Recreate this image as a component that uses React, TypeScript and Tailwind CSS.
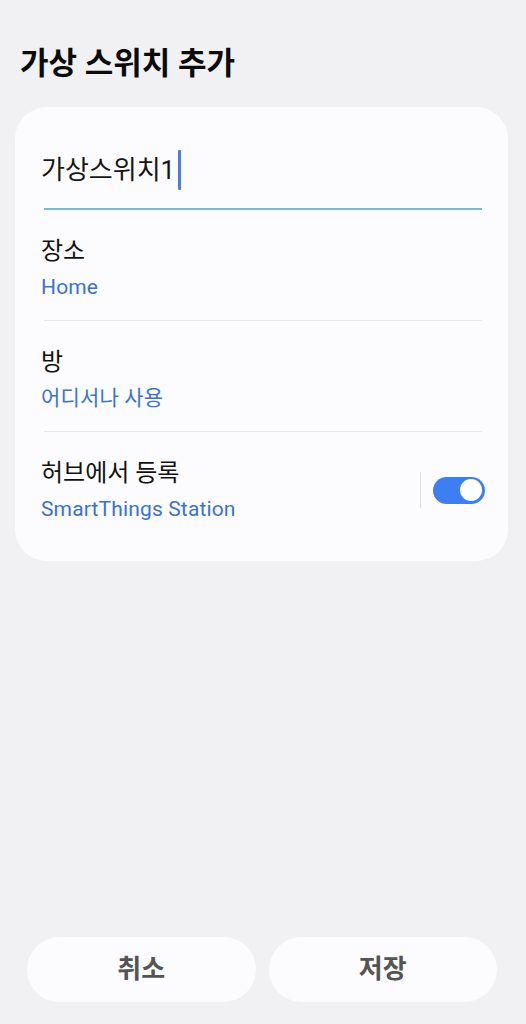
import React from "react";

const FONT = { fontFamily: 'Roboto, "Noto Sans CJK KR", sans-serif' };

function Row({ title, value, last, children }: { title: string; value: string; last?: boolean; children?: React.ReactNode }) {
  return (
    <div className={`flex items-center pt-[26px] pb-[20px] ml-[3px] ${last ? "" : "border-b border-[#e6e6e8]"}`}>
      <div className="flex-1 -ml-[3px]">
        <div className="text-[24px] leading-[30px] text-[#111111]">{title}</div>
        <div className="mt-[8px] text-[21px] leading-[26px] tracking-[0.15px] text-[#3b72d2]">{value}</div>
      </div>
      {children}
    </div>
  );
}

export default function App() {
  return (
    <div className="min-h-[1024px] bg-[#f1f1f3] flex flex-col" style={FONT}>
      <div className="pl-[20px] pt-[47px] text-[31px] leading-[34px] font-bold text-[#0b0b0b]">가상 스위치 추가</div>
      <div className="mt-[26px] ml-[15px] mr-[18px] bg-[#fcfcfe] rounded-[32px] pl-[26px] pr-[26px] pb-[19px]">
        <div className="pt-[43px] pb-[18px] border-b-2 border-[#7bbad2] ml-[3px]">
          <div className="flex items-center h-[40px] -ml-[3px]">
            <span className="text-[26px] leading-[40px] text-[#161616]">가상스위치1</span>
            <span className="ml-[3px] w-[3px] h-[40px] bg-[#4a7de6] rounded-[1px]" />
          </div>
        </div>
        <Row title="장소" value="Home" />
        <Row title="방" value="어디서나 사용" />
        <Row title="허브에서 등록" value="SmartThings Station" last>
          <div className="w-px h-[36px] bg-[#e4e4e6] mr-[12px]" />
          <div className="-mr-[3px] w-[52px] h-[27px] rounded-full bg-[#3d7ef2] flex items-center justify-end pr-[3px]">
            <div className="w-[22px] h-[22px] rounded-full bg-white" />
          </div>
        </Row>
      </div>
      <div className="mt-auto flex gap-[13px] ml-[27px] mr-[29px] mb-[22px]">
        <button className="flex-1 h-[65px] rounded-full bg-[#fcfcfe] text-[26px] font-bold text-[#545456]">취소</button>
        <button className="flex-1 h-[65px] rounded-full bg-[#fcfcfe] text-[26px] font-bold text-[#545456]">저장</button>
      </div>
    </div>
  );
}
